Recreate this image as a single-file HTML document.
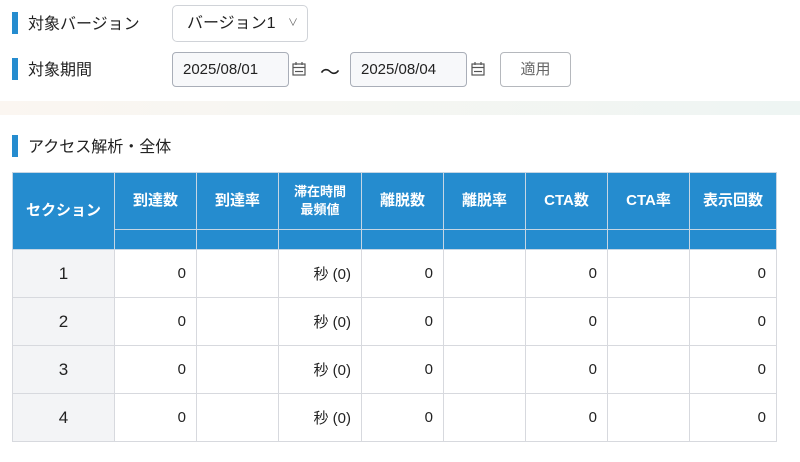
<!DOCTYPE html>
<html><head><meta charset="utf-8"><style>
*{box-sizing:border-box;margin:0;padding:0}
body{width:800px;height:462px;background:#fff;font-family:"Liberation Sans","Noto Sans CJK JP",sans-serif;color:#222;position:relative;overflow:hidden}
.abs{position:absolute}
.bar{position:absolute;left:12px;width:6px;background:#258ccf}
.lbl{position:absolute;left:28px;font-size:16px;line-height:22px}
.inp{position:absolute;border:1px solid #a9aeb8;border-radius:4px;background:#f7f8fa;font-size:15px;padding-left:10px;line-height:33px}
.cal{position:absolute;width:14px;height:14px}
table{position:absolute;left:12px;top:172px;border-collapse:collapse;width:765px;table-layout:fixed}
th{background:#258ccf;color:#fff;font-size:15px;font-weight:bold;border:1px solid #c6d6e4;text-align:center;line-height:18px}
td{border:1px solid #d7d9de;font-size:15px;text-align:right;padding-right:10px;height:48px}
td.s{background:#f3f4f6;text-align:center;padding:0;font-size:17px}
</style></head><body>
<div class="bar" style="top:12px;height:22px"></div>
<div class="lbl" style="top:14px">対象バージョン</div>
<div class="abs" style="left:172px;top:5px;width:136px;height:37px;border:1px solid #d0d3d8;border-radius:5px;font-size:16px;padding-left:14px;line-height:35px">バージョン1<span style="position:absolute;right:9px;font-size:10px;color:#666">&#8744;</span></div>
<div class="bar" style="top:58px;height:22px"></div>
<div class="lbl" style="top:60px">対象期間</div>
<div class="inp" style="left:172px;top:52px;width:117px;height:35px">2025/08/01</div>
<svg class="cal" style="left:292px;top:62px" viewBox="0 0 14 14" fill="none" stroke="#555" stroke-width="1.2"><rect x="1" y="2" width="12" height="11"/><line x1="1" y1="5.5" x2="13" y2="5.5"/><line x1="4" y1="0" x2="4" y2="3"/><line x1="10" y1="0" x2="10" y2="3"/><line x1="3" y1="9.5" x2="11" y2="9.5"/></svg>
<div class="abs" style="left:320px;top:56px;font-size:20px">〜</div>
<div class="inp" style="left:350px;top:52px;width:117px;height:35px">2025/08/04</div>
<svg class="cal" style="left:471px;top:62px" viewBox="0 0 14 14" fill="none" stroke="#555" stroke-width="1.2"><rect x="1" y="2" width="12" height="11"/><line x1="1" y1="5.5" x2="13" y2="5.5"/><line x1="4" y1="0" x2="4" y2="3"/><line x1="10" y1="0" x2="10" y2="3"/><line x1="3" y1="9.5" x2="11" y2="9.5"/></svg>
<div class="abs" style="left:500px;top:52px;width:71px;height:35px;border:1px solid #b5b8bd;border-radius:4px;text-align:center;line-height:33px;font-size:15px;color:#666">適用</div>
<div class="abs" style="left:0;top:101px;width:800px;height:14px;background:linear-gradient(90deg,#fbf6f1,#eef5f3)"></div>
<div class="bar" style="top:135px;height:22px"></div>
<div class="lbl" style="top:137px">アクセス解析・全体</div>
<table>
<colgroup><col style="width:102px"><col style="width:82px"><col style="width:82px"><col style="width:83px"><col style="width:82px"><col style="width:82px"><col style="width:82px"><col style="width:82px"><col style="width:87px"></colgroup>
<tr style="height:57px"><th rowspan="2">セクション</th><th>到達数</th><th>到達率</th><th style="font-size:13px">滞在時間<br>最頻値</th><th>離脱数</th><th>離脱率</th><th>CTA数</th><th>CTA率</th><th>表示回数</th></tr>
<tr style="height:20px"><th></th><th></th><th></th><th></th><th></th><th></th><th></th><th></th></tr>
<tr><td class="s">1</td><td>0</td><td></td><td>秒 (0)</td><td>0</td><td></td><td>0</td><td></td><td>0</td></tr>
<tr><td class="s">2</td><td>0</td><td></td><td>秒 (0)</td><td>0</td><td></td><td>0</td><td></td><td>0</td></tr>
<tr><td class="s">3</td><td>0</td><td></td><td>秒 (0)</td><td>0</td><td></td><td>0</td><td></td><td>0</td></tr>
<tr><td class="s">4</td><td>0</td><td></td><td>秒 (0)</td><td>0</td><td></td><td>0</td><td></td><td>0</td></tr>
</table>
</body></html>
